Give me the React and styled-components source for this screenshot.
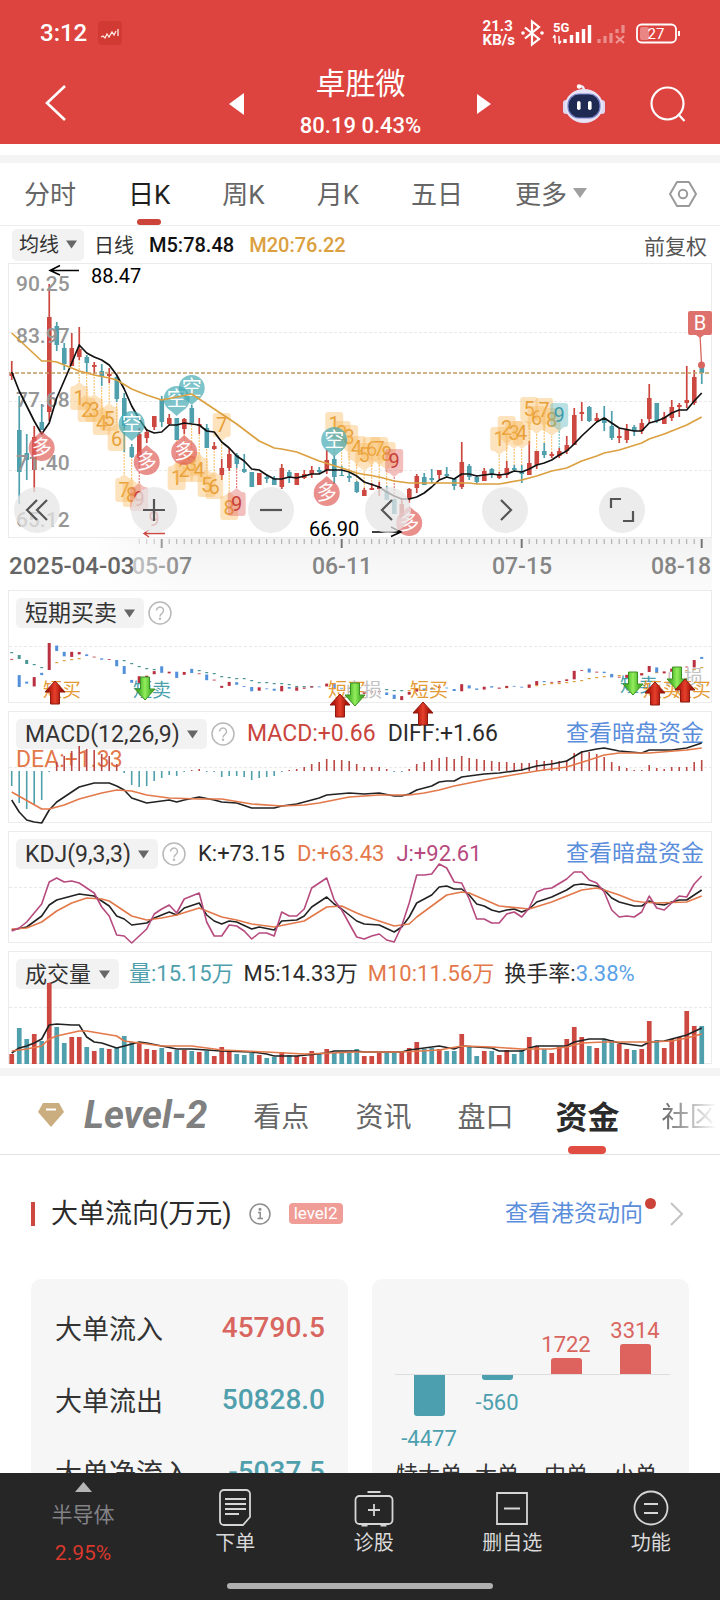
import styled, { createGlobalStyle } from "styled-components";

const RED = '#cc4840'
const TEAL = '#4f9fad'
const ORANGE = '#e3784a'
const GOLD = '#dba040'
const STEP = 7.5
const xOf = (i) => 11.7 + i * STEP

// color, body top, body bottom, high, low
const candles = [
    ['r', 372, 375, 360, 379], ['t', 429, 471, 395, 503], ['t', 452, 459, 433, 479], ['r', 436, 469, 425, 491],
    ['t', 421, 429, 403, 429], ['r', 316, 411, 283, 420], ['t', 325, 344, 321, 350], ['t', 347, 363, 342, 369],
    ['r', 347, 365, 332, 365], ['r', 348, 356, 326, 359], ['t', 356, 362, 354, 371], ['r', 364, 366, 361, 373],
    ['t', 370, 375, 363, 385], ['r', 373, 375, 367, 382], ['t', 376, 398, 374, 401], ['t', 397, 425, 392, 451],
    ['t', 446, 456, 443, 457], ['r', 433, 457, 427, 462], ['r', 431, 437, 428, 442], ['r', 415, 426, 415, 429],
    ['t', 398, 421, 395, 426], ['r', 417, 423, 413, 425], ['t', 417, 439, 417, 439], ['r', 418, 428, 417, 433],
    ['t', 407, 422, 404, 422], ['r', 423, 425, 417, 433], ['t', 427, 447, 423, 447], ['r', 445, 448, 441, 449],
    ['r', 467, 474, 458, 479], ['r', 453, 467, 447, 470], ['t', 454, 463, 452, 467], ['t', 468, 471, 453, 472],
    ['t', 471, 486, 471, 486], ['r', 472, 484, 472, 484], ['t', 476, 478, 473, 482], ['t', 477, 484, 475, 484],
    ['r', 467, 486, 463, 488], ['t', 471, 477, 469, 482], ['r', 472, 484, 472, 484], ['r', 473, 477, 469, 478],
    ['r', 469, 473, 465, 477], ['t', 469, 471, 466, 473], ['r', 459, 469, 449, 473], ['t', 458, 476, 455, 483],
    ['t', 474, 475, 465, 475], ['t', 475, 477, 472, 481], ['t', 481, 491, 480, 492], ['r', 489, 495, 487, 495],
    ['r', 487, 489, 482, 489], ['r', 486, 488, 481, 495], ['t', 490, 499, 485, 499], ['t', 498, 513, 498, 513],
    ['r', 503, 517, 498, 517], ['r', 488, 498, 487, 502], ['r', 475, 487, 473, 492], ['t', 476, 484, 472, 484],
    ['t', 477, 479, 468, 482], ['r', 469, 474, 469, 478], ['t', 473, 475, 466, 477], ['t', 478, 485, 478, 489],
    ['r', 461, 486, 441, 488], ['t', 465, 476, 463, 479], ['t', 476, 481, 474, 483], ['r', 470, 480, 467, 480],
    ['t', 468, 473, 467, 477], ['r', 473, 477, 471, 478], ['r', 467, 474, 460, 477], ['t', 467, 469, 464, 470],
    ['t', 470, 473, 464, 482], ['r', 462, 474, 440, 474], ['r', 450, 464, 450, 468], ['t', 450, 454, 442, 457],
    ['r', 453, 455, 451, 457], ['r', 450, 455, 447, 457], ['r', 444, 450, 435, 453], ['r', 414, 444, 407, 444],
    ['r', 411, 413, 401, 420], ['t', 406, 420, 405, 421], ['r', 417, 420, 412, 421], ['t', 417, 422, 405, 430],
    ['t', 425, 437, 410, 439], ['r', 435, 437, 427, 442], ['r', 428, 439, 423, 442], ['t', 426, 430, 424, 435],
    ['r', 422, 430, 418, 433], ['r', 397, 418, 383, 422], ['t', 402, 420, 402, 422], ['r', 416, 423, 411, 423],
    ['r', 406, 417, 399, 420], ['r', 404, 406, 402, 416], ['r', 399, 402, 365, 407], ['r', 376, 402, 369, 404],
    ['t', 365, 372, 365, 383],
]

// every line is a list of [bar index, y]
const ma5 = [[0, 371], [1, 390], [2, 405], [3, 420], [4, 433], [5, 422], [6, 397], [7.5, 371], [9, 344], [10, 352], [11, 356], [12, 359], [13, 364], [14, 374], [15, 388], [16, 405], [17, 418], [18, 429], [19, 432], [20, 431], [21, 424], [22, 424], [23, 422], [25, 424], [26, 430], [27, 431], [28, 441], [29, 447], [30, 455], [31, 460], [32, 468], [33, 469], [34, 474], [35, 478], [36, 478], [37, 476], [38, 477], [39, 475], [40, 473], [41, 473], [42, 469], [44, 469], [45, 471], [46, 475], [47, 481], [49, 486], [50, 491], [51, 495], [52, 498], [53, 498], [54, 496], [55, 492], [56, 486], [57, 479], [58, 476], [59, 478], [60, 473], [61, 473], [62, 475], [63, 474], [64, 473], [65, 474], [66, 473], [67, 470], [68, 471], [69, 468], [70, 464], [71, 462], [72, 459], [73, 454], [74, 450], [75, 443], [76, 435], [77, 428], [78, 421], [79, 417], [80, 422], [81, 427], [83, 430], [84, 430], [85, 422], [86, 420], [87, 417], [88, 412], [89, 409], [90, 409], [91, 400], [92, 392]]
const ma20 = [[0, 332], [1, 339], [4, 360], [5, 360], [6, 361], [7, 364], [9, 370], [11, 374], [13, 377], [14, 379], [16, 388], [18, 394], [20, 399], [24, 393], [28, 413], [30, 423], [33, 440], [35, 447], [36, 448], [38, 451], [41, 460], [44, 467], [46, 472], [49, 476], [51, 480], [53, 482], [61, 482], [62, 483], [65, 483], [68, 479], [70, 475], [72, 470], [74, 467], [76, 460], [78, 455], [79, 452], [81, 449], [84, 442], [85, 438], [87, 433], [89, 427], [90, 424], [92, 416]]
const diff = [[0, 798], [1, 810], [2, 818], [3, 820], [4, 821], [5, 808], [6, 800], [7, 795], [9, 785], [11, 781], [13, 781], [14, 784], [15, 788], [16, 796], [18, 801], [19, 800], [21, 798], [22, 800], [23, 798], [25, 795], [27, 798], [28, 800], [30, 801], [32, 806], [35, 806], [36, 804], [38, 802], [41, 796], [42, 793], [45, 791], [47, 792], [49, 791], [51, 794], [52, 794], [53, 792], [54, 788], [56, 784], [57, 780], [58, 779], [59, 779], [60, 775], [63, 772], [65, 771], [68, 768], [70, 764], [72, 762], [74, 759], [76, 750], [78, 747], [79, 746], [81, 749], [84, 751], [85, 748], [88, 748], [90, 746], [92, 741]]
const dea = [[0, 790], [4, 807], [5, 807], [7, 803], [9, 797], [12, 791], [14, 788], [16, 789], [18, 793], [21, 796], [25, 797], [28, 797], [32, 802], [36, 804], [39, 803], [41, 801], [45, 795], [49, 793], [53, 793], [55, 791], [57, 788], [59, 784], [61, 781], [63, 778], [66, 774], [70, 769], [74, 765], [77, 758], [79, 753], [81, 751], [85, 751], [90, 748], [92, 746]]
const kLine = [[0, 928], [2, 925], [4, 914], [5, 903], [6, 898], [7, 896], [9, 892], [11, 894], [13, 904], [14, 914], [15, 917], [16, 923], [18, 921], [19, 916], [21, 910], [22, 913], [23, 906], [25, 901], [26, 913], [27, 919], [28, 922], [29, 919], [30, 920], [32, 927], [33, 925], [35, 928], [36, 919], [38, 918], [39, 914], [40, 905], [42, 895], [43, 902], [44, 907], [46, 919], [47, 922], [49, 923], [51, 930], [52, 925], [53, 915], [54, 901], [56, 893], [57, 885], [58, 884], [59, 887], [60, 887], [61, 893], [62, 902], [63, 904], [64, 908], [65, 910], [66, 908], [67, 907], [68, 910], [69, 907], [70, 900], [72, 895], [74, 888], [75, 883], [76, 882], [78, 884], [79, 888], [80, 896], [81, 900], [83, 904], [84, 904], [85, 899], [86, 902], [87, 903], [88, 900], [89, 898], [90, 898], [92, 888]]
const dLine = [[0, 927], [2, 926], [4, 920], [6, 909], [8, 901], [10, 896], [12, 897], [13, 899], [16, 914], [18, 918], [20, 916], [22, 913], [25, 906], [28, 915], [30, 918], [32, 922], [35, 925], [39, 919], [42, 905], [44, 904], [46, 911], [47, 914], [49, 919], [51, 924], [53, 922], [54, 915], [56, 904], [58, 893], [60, 890], [61, 891], [65, 904], [69, 907], [72, 900], [76, 888], [78, 886], [79, 888], [81, 893], [83, 899], [84, 900], [86, 901], [90, 900], [92, 894]]
const jLine = [[0, 929], [1, 926], [2, 920], [4, 902], [5, 880], [6, 876], [7, 880], [8, 879], [9, 881], [10, 886], [11, 891], [12, 905], [13, 914], [14, 933], [15, 934], [16, 941], [17, 934], [18, 927], [19, 912], [20, 907], [21, 903], [22, 911], [23, 897], [25, 891], [26, 920], [27, 934], [28, 934], [29, 923], [30, 924], [31, 929], [32, 937], [33, 931], [34, 931], [35, 934], [36, 910], [37, 914], [38, 914], [39, 907], [40, 886], [41, 881], [42, 876], [43, 898], [44, 908], [46, 935], [47, 937], [48, 934], [49, 932], [50, 938], [51, 940], [52, 924], [53, 901], [54, 873], [55, 873], [56, 872], [57, 862], [58, 866], [59, 880], [60, 881], [61, 897], [62, 917], [63, 917], [64, 921], [65, 921], [66, 912], [67, 910], [68, 915], [69, 906], [70, 890], [71, 887], [72, 886], [74, 877], [75, 870], [76, 870], [77, 878], [78, 881], [79, 890], [80, 908], [81, 915], [82, 914], [83, 915], [84, 910], [85, 894], [86, 906], [87, 908], [89, 894], [90, 895], [91, 882], [92, 874]]
const vol5 = [[0, 1052], [1, 1047], [2, 1045], [3, 1042], [4, 1038], [5, 1024], [6, 1023], [8, 1024], [9, 1024], [10, 1036], [11, 1041], [12, 1042], [14, 1047], [16, 1043], [17, 1041], [18, 1042], [20, 1045], [22, 1048], [24, 1048], [28, 1050], [32, 1051], [34, 1053], [35, 1055], [38, 1055], [42, 1052], [43, 1050], [46, 1050], [47, 1051], [52, 1051], [53, 1049], [55, 1047], [57, 1045], [59, 1048], [60, 1045], [64, 1047], [65, 1050], [68, 1050], [69, 1047], [70, 1045], [74, 1045], [75, 1041], [77, 1038], [79, 1038], [81, 1042], [84, 1045], [85, 1041], [87, 1040], [89, 1036], [90, 1034], [92, 1027]]
const vol10 = [[0, 1050], [2, 1048], [4, 1045], [5, 1038], [6, 1035], [9, 1030], [10, 1030], [14, 1035], [15, 1040], [17, 1042], [20, 1045], [24, 1045], [28, 1049], [34, 1051], [39, 1053], [46, 1051], [52, 1051], [57, 1049], [60, 1045], [64, 1046], [68, 1048], [72, 1048], [74, 1046], [76, 1042], [79, 1041], [85, 1041], [88, 1040], [90, 1037], [92, 1033]]

const macdBars = [-15, -32, -38, -34, -29, -1, 9, 15, 20, 25, 22, 21, 17, 15, 7, -2, -14, -16, -15, -10, -7, -4, -5, -1, 1, 2, -1, -1, -6, -5, -5, -6, -9, -7, -6, -5, -1, 1, 2, 4, 7, 9, 12, 11, 11, 10, 7, 4, 4, 4, 2, -1, -1, 2, 7, 9, 11, 13, 14, 12, 15, 13, 12, 11, 10, 9, 9, 8, 8, 8, 11, 10, 11, 10, 11, 18, 20, 19, 17, 14, 9, 5, 3, 1, 1, 6, 3, 2, 4, 4, 4, 9, 11]
const volumes = [10, 36, 25, 30, 23, 81, 37, 21, 27, 27, 17, 13, 16, 15, 16, 28, 22, 21, 15, 14, 16, 12, 14, 14, 13, 12, 13, 8, 17, 13, 10, 9, 11, 9, 6, 7, 12, 9, 8, 7, 13, 10, 15, 11, 11, 12, 15, 8, 8, 11, 11, 11, 12, 16, 22, 15, 16, 15, 13, 13, 30, 17, 8, 13, 13, 9, 14, 10, 14, 27, 18, 15, 11, 17, 25, 37, 27, 18, 16, 25, 24, 20, 15, 14, 15, 43, 24, 16, 25, 27, 53, 38, 38]

const shortDown = [[0, 651], [1, 654], [2, 659], [3, 663], [4, 666], [15, 659], [16, 662], [17, 665], [18, 667], [19, 668], [25, 669], [26, 671], [27, 672], [28, 675], [29, 676], [30, 677], [31, 677], [32, 679], [33, 681], [34, 681], [35, 682], [36, 682], [37, 683], [38, 685], [39, 685], [40, 685], [50, 688], [51, 689], [52, 689]]
const shortUp = [[6, 661], [7, 659], [8, 658], [9, 657], [53, 689], [54, 688], [56, 687], [66, 686], [69, 684], [70, 684], [71, 683], [72, 682], [73, 682], [74, 681], [75, 680], [76, 679], [77, 677], [78, 676], [79, 675], [80, 674], [81, 674], [84, 673], [86, 671], [88, 669], [90, 669], [91, 668], [92, 666]]

// bar index, centre y, text, tip direction, color
const tags = [
    [9, 397, '1', 'up'], [10, 409, '2', 'up'], [11, 409, '3', 'up'], [12, 422, '4', 'up'], [13, 418, '5', 'up'],
    [14, 438, '6', 'up'], [15, 489, '7', 'up'], [16, 494, '8', 'up'], [17, 498, '9', 'up', 'r'],
    [22, 477, '1', 'up'], [23, 469, '2', 'up'], [24, 463, '3', 'up'], [25, 469, '4', 'up'], [26, 484, '5', 'up'],
    [27, 486, '6', 'up'], [28, 424, '7', 'down'], [29, 507, '8', 'up'], [30, 503, '9', 'up', 'r'],
    [43, 423, '1', 'down'], [44, 432, '2', 'down'], [45, 436, '3', 'down'], [46, 447, '4', 'down'], [47, 454, '5', 'down'],
    [48, 448, '6', 'down'], [49, 448, '7', 'down'], [50, 453, '8', 'down'], [51, 460, '9', 'down', 'r'],
    [65, 438, '1', 'down'], [66, 427, '2', 'down'], [67, 432, '3', 'down'], [68, 432, '4', 'down'], [69, 408, '5', 'down'],
    [70, 417, '6', 'down'], [71, 409, '7', 'down'], [72, 419, '8', 'down'], [73, 414, '9', 'down', 't'],
]
const bubbles = [
    [16, 423, '空'], [22, 398, '空'], [24, 387, '空'], [43, 439, '空'],
    [4, 447, '多'], [18, 461, '多'], [23, 451, '多'], [42, 492, '多'], [53, 522, '多'],
]

const points = (line) => line.map(([i, y]) => `${xOf(i)},${y}`).join(' ')
const tone = (c) => (c === 'r' ? RED : TEAL)

function Line({ data, color, width = 1.6 }) {
    return <polyline points={points(data)} fill="none" stroke={color} strokeWidth={width} strokeLinejoin="round" />
}

function Frame({ y, h, gridY = [] }) {
    return (
        <>
            <rect x="8.5" y={y + 0.5} width="703" height={h - 1} fill="none" stroke="#ebebeb" />
            {gridY.map(g => (
                <path key={g} d={`M9 ${g}H711`} stroke="#e9e9e9" strokeDasharray="3 2" />
            ))}
        </>
    )
}

function Tag({ data }) {
    const [i, y, text, dir, kind] = data
    const fill = kind === 'r' ? '#e0605c' : kind === 't' ? '#58b4ba' : '#f9bb5e'
    const color = kind === 'r' ? '#c9403a' : kind === 't' ? '#3f9cab' : '#e8a038'
    const x = xOf(i)
    const edge = dir === 'up' ? candles[i][4] : candles[i][3]
    const tip = dir === 'up' ? `M${x - 5} ${y - 12}l5 -4 5 4z` : `M${x - 5} ${y + 12}l5 4 5 -4z`
    return (
        <g>
            <path d={`M${x} ${dir === 'up' ? y - 16 : y + 16}V${edge}`} stroke={fill} strokeDasharray="2 1" />
            <g opacity="0.4">
                <rect x={x - 9} y={y - 12} width="18" height="24" rx="3" fill={fill} />
                <path d={tip} fill={fill} />
            </g>
            <TagText x={x} y={y + 7} fill={color}>{text}</TagText>
        </g>
    )
}

function Bubble({ data }) {
    const [i, y, text] = data
    const x = xOf(i)
    const fill = text === '空' ? '#45aab4' : '#e0605c'
    const tip = text === '空' ? `M${x - 9} ${y + 9}L${x} ${y + 17}L${x + 9} ${y + 9}z` : `M${x - 9} ${y - 9}L${x} ${y - 17}L${x + 9} ${y - 9}z`
    return (
        <g>
            <g opacity="0.7">
                <circle cx={x} cy={y} r="13" fill={fill} />
                <path d={tip} fill={fill} />
            </g>
            <TagText x={x} y={y + 7} fill="#ffffff">{text}</TagText>
        </g>
    )
}

function KLineChart() {
    return (
        <Drawing viewBox="8 262 704 275">
            <Frame y={262} h={275} gridY={[331.5, 400.5, 469.5]} />
            {candles.map(([c, top, bottom, high, low], i) => (
                <g key={i} fill={tone(c)}>
                    <rect x={xOf(i) - 0.8} y={high} width="1.7" height={low - high} />
                    <rect x={xOf(i) - 2.2} y={top} width="4.6" height={Math.max(bottom - top, 1)} />
                </g>
            ))}
            <AxisText x="16" y="290">90.25</AxisText>
            <AxisText x="16" y="342">83.97</AxisText>
            <AxisText x="16" y="406">77.68</AxisText>
            <AxisText x="16" y="469">71.40</AxisText>
            <AxisText x="16" y="526">65.12</AxisText>
            <path d="M9 372H711" stroke="#c49a62" strokeWidth="1.4" strokeDasharray="4 2" />
            {tags.map((t, i) => <Tag key={i} data={t} />)}
            <Line data={ma5} color="#111111" width={1.7} />
            {bubbles.map((b, i) => <Bubble key={i} data={b} />)}
            <Line data={ma20} color={GOLD} width={1.7} />
            <TagText x="154" y="525" fill="#d55a54">9</TagText>
            <path d="M165 532.5H144M149 529l-5 3.500 5 3.500" fill="none" stroke="#cc4840" strokeWidth="1.4" />
            <path d="M79 269.500H50M60 264.500l-10 5 10 4.500" fill="none" stroke="#000000" strokeWidth="1.5" />
            <NoteText x="91" y="282">88.47</NoteText>
            <NoteText x="309" y="535">66.90</NoteText>
            <path d="M372 531H401M391 526l10 5-10 4.500" fill="none" stroke="#000000" strokeWidth="1.5" />
            <path d="M700 334L701.500 362" stroke="#d9655f" strokeWidth="1.3" />
            <circle cx="701.500" cy="364" r="3.500" fill="#d9655f" />
            <path d="M690 310h20a2 2 0 0 1 2 2v20a2 2 0 0 1 -2 2h-6l-4 3 -4-3h-6a2 2 0 0 1 -2-2v-20a2 2 0 0 1 2-2z" fill="#de716c" />
            <TagText x="700" y="329" fill="#ffffff">B</TagText>
        </Drawing>
    )
}

function TimeAxis() {
    const majors = [20, 44, 68, 92]
    return (
        <Drawing viewBox="8 537 704 52">
            <defs>
                <linearGradient id="axisDown" x1="0" y1="0" x2="0" y2="1">
                    <stop offset="0" stopColor="#f2f2f2" />
                    <stop offset="1" stopColor="#fbfbfb" />
                </linearGradient>
                <linearGradient id="axisFade" x1="0" y1="0" x2="1" y2="0">
                    <stop offset="0" stopColor="#ffffff" />
                    <stop offset="0.5" stopColor="#ffffff" stopOpacity="0.9" />
                    <stop offset="1" stopColor="#ffffff" stopOpacity="0" />
                </linearGradient>
            </defs>
            <rect x="8" y="537" width="704" height="52" fill="url(#axisDown)" />
            {candles.map((c, i) => i > 16 && (
                <path key={i} d={`M${xOf(i)} 538v${majors.includes(i) ? 9 : 5}`} stroke={majors.includes(i) ? '#777777' : '#a5a5a5'} strokeWidth={majors.includes(i) ? 2 : 1} />
            ))}
            <DateText x="162" y="573" $anchor="middle">05-07</DateText>
            <DateText x="342" y="573" $anchor="middle">06-11</DateText>
            <DateText x="522" y="573" $anchor="middle">07-15</DateText>
            <DateText x="711" y="573" $anchor="end">08-18</DateText>
            <rect x="8" y="537" width="180" height="52" fill="url(#axisFade)" />
            <DateText x="9" y="573" $dark>2025-04-03</DateText>
        </Drawing>
    )
}

function SignalArrow({ x, y, up }) {
    const d = up
        ? `M${x} ${y}l10 11h-5.500v12h-9v-12h-5.500z`
        : `M${x} ${y + 23}l10 -11h-5.500v-12h-9v12h-5.500z`
    return <path d={d} fill={up ? 'url(#arrowRed)' : 'url(#arrowGreen)'} stroke={up ? '#8c1a10' : '#3c8f22'} strokeWidth="1" />
}

function ShortTermChart() {
    const scale = (y) => 641 + (y - 316) * 0.284
    return (
        <Drawing viewBox="8 588 704 113">
            <defs>
                <linearGradient id="arrowRed" x1="0" y1="0" x2="1" y2="0">
                    <stop offset="0.2" stopColor="#b3170c" />
                    <stop offset="0.5" stopColor="#e5402c" />
                    <stop offset="0.8" stopColor="#a8140a" />
                </linearGradient>
                <linearGradient id="arrowGreen" x1="0" y1="0" x2="1" y2="0">
                    <stop offset="0.2" stopColor="#48b22a" />
                    <stop offset="0.5" stopColor="#93ee5c" />
                    <stop offset="0.8" stopColor="#48b22a" />
                </linearGradient>
            </defs>
            <Frame y={588} h={113} gridY={[644.5]} />
            {shortDown.map(([i, y]) => <rect key={i} x={xOf(i) - 1.5} y={y - 1} width="3" height={i > 0 && i < 3 ? 4 : 1.2} fill="#4a9793" />)}
            {shortUp.map(([i, y]) => <rect key={i} x={xOf(i) - 1.5} y={y - 1} width="3" height="1.2" fill={GOLD} />)}
            {candles.map(([c, top, bottom], i) => (
                <rect key={i} x={xOf(i) - 1.5} y={scale(top)} width="3" height={Math.max(scale(bottom) - scale(top), 0.8)} fill={c === 'r' ? '#b93040' : '#5290dc'} />
            ))}
            <SignalText x="43" y="695" fill="#e59b35">短买</SignalText>
            <SignalText x="133" y="695" fill="#4a9fad">短卖</SignalText>
            <SignalText x="328" y="695" fill="#e59b35">短买</SignalText>
            <SignalText x="344" y="695" fill="#c2c2c2">止损</SignalText>
            <SignalText x="410" y="695" fill="#e59b35">短买</SignalText>
            <SignalText x="620" y="690" fill="#4a9fad">短卖</SignalText>
            <SignalText x="665" y="682" fill="#c2c2c2">止损</SignalText>
            <SignalText x="643" y="695" fill="#e59b35">短买</SignalText>
            <SignalText x="673" y="695" fill="#e59b35">短买</SignalText>
            <SignalArrow x={55} y={679} up />
            <SignalArrow x={145} y={675} />
            <SignalArrow x={340} y={692} up />
            <SignalArrow x={355} y={681} />
            <SignalArrow x={423} y={700} up />
            <SignalArrow x={633} y={670} />
            <SignalArrow x={655} y={680} up />
            <SignalArrow x={677} y={665} />
            <SignalArrow x={685} y={677} up />
        </Drawing>
    )
}

function MacdChart() {
    return (
        <Drawing viewBox="8 709 704 112">
            <Frame y={709} h={112} gridY={[765.5]} />
            {macdBars.map((v, i) => (
                <rect key={i} x={xOf(i) - 0.8} y={v > 0 ? 769 - v : 769} width="1.600" height={Math.abs(v)} fill={v > 0 ? '#bb4a46' : '#4f9fad'} />
            ))}
            <Line data={diff} color="#222222" />
            <Line data={dea} color={ORANGE} />
        </Drawing>
    )
}

function KdjChart() {
    return (
        <Drawing viewBox="8 829 704 112">
            <Frame y={829} h={112} gridY={[885.5]} />
            <Line data={kLine} color="#222222" />
            <Line data={dLine} color={ORANGE} />
            <Line data={jLine} color="#b64a7e" />
        </Drawing>
    )
}

function VolumeChart() {
    return (
        <Drawing viewBox="8 950 704 113">
            <Frame y={950} h={113} gridY={[1006.5]} />
            {volumes.map((v, i) => (
                <rect key={i} x={xOf(i) - 2.3} y={1063 - v} width="4.700" height={v} fill={tone(candles[i][0])} />
            ))}
            <Line data={vol5} color="#222222" />
            <Line data={vol10} color={ORANGE} />
        </Drawing>
    )
}

function FlowChart() {
    const bars = [
        { name: '特大单', value: '-4477', x: 42, h: 41, labelY: 167 },
        { name: '大单', value: '-560', x: 110, h: 5, labelY: 131 },
        { name: '中单', value: '1722', x: 179, h: -16, labelY: 73 },
        { name: '小单', value: '3314', x: 248, h: -30, labelY: 59 },
    ]
    return (
        <Drawing viewBox="0 0 317 240">
            <path d="M23 95.500H298" stroke="#dddddd" />
            {bars.map(b => (
                <g key={b.name}>
                    <path
                        d={b.h > 0
                            ? `M${b.x} 96h31v${b.h - 3}q0 3 -3 3h-25q-3 0 -3 -3z`
                            : `M${b.x} 95h31v${b.h + 3}q0 -3 -3 -3h-25q-3 0 -3 3z`}
                        fill={b.h > 0 ? '#4b9fae' : '#de625e'}
                    />
                    <FlowText x={b.x + 15} y={b.labelY} fill={b.h > 0 ? '#4b9fae' : '#d9655f'}>{b.value}</FlowText>
                    <FlowText x={b.x + 15} y="203" fill="#333333">{b.name}</FlowText>
                </g>
            ))}
        </Drawing>
    )
}

function Caret({ size = 11, color = '#666666' }) {
    return <svg width={size} height={size - 2} viewBox="0 0 11 9"><path d="M0 0.500h11L5.500 8.500z" fill={color} /></svg>
}

function Picker({ text, label, small }) {
    return (
        <Pill $small={small}>
            <select aria-label={label}>
                <option>{text}</option>
            </select>
            <Caret />
        </Pill>
    )
}

function Help() {
    return (
        <IconButton type="button" aria-label="说明">
            <svg width="24" height="24" viewBox="0 0 24 24" fill="none" stroke="#b9b9b9" strokeWidth="1.500">
                <circle cx="12" cy="12" r="11" />
                <path d="M8.500 9.500a3.500 3.500 0 1 1 5.500 2.900c-1.300 .9-2 1.500-2 3" />
                <circle cx="12" cy="17.800" r="0.500" />
            </svg>
        </IconButton>
    )
}

function StatusIcons() {
    return (
        <svg width="160" height="28" viewBox="520 19 160 28" fill="none" stroke="#ffffff">
            <path d="M525 27.500l14 11.500-7 5.500v-23l7 5.500-14 11.500" strokeWidth="2.200" />
            <circle cx="523" cy="33" r="1.800" fill="#ffffff" stroke="none" />
            <circle cx="542" cy="33" r="1.800" fill="#ffffff" stroke="none" />
            <StatusText x="553" y="32">5G</StatusText>
            <path d="M555 43v-7M559 36v7M553 38l2-3M561 41l-2 3" strokeWidth="1.400" />
            <path d="M565 43v-4M571.500 43v-8M577.500 43v-11M583.500 43v-14M589.500 43v-18" strokeWidth="3.400" />
            <path d="M599 43v-4M605 43v-7M611 43v-10M623 33v-8M617 33v-4" strokeWidth="3.200" opacity="0.4" />
            <path d="M616 36l8 7M624 36l-8 7" strokeWidth="2" opacity="0.45" />
            <rect x="637" y="24.500" width="39" height="18" rx="4.500" strokeWidth="1.800" />
            <rect x="640" y="27" width="9" height="13" rx="2" fill="#ffffff" stroke="none" opacity="0.35" />
            <path d="M679 31v5" strokeWidth="2" />
            <BatteryText x="656" y="39">27</BatteryText>
        </svg>
    )
}

function Robot() {
    return (
        <svg width="44" height="42" viewBox="0 0 44 42">
            <path d="M22 8c0-3-1-5-4-5" fill="none" stroke="#e9e6f5" strokeWidth="2.500" />
            <circle cx="17" cy="3.500" r="2.200" fill="#ffffff" />
            <rect x="1" y="17" width="6" height="14" rx="3" fill="#dcd6f2" />
            <rect x="37" y="17" width="6" height="14" rx="3" fill="#dcd6f2" />
            <ellipse cx="22" cy="23" rx="19" ry="17" fill="#e8e4f7" />
            <rect x="6" y="11" width="32" height="24" rx="11" fill="#1f2a52" stroke="#7c83c9" strokeWidth="1.200" />
            <rect x="15" y="18" width="3.600" height="9" rx="1.800" fill="#ffffff" />
            <rect x="26" y="18" width="3.600" height="9" rx="1.800" fill="#ffffff" />
        </svg>
    )
}

const toolIcons = [
    { label: '后退到最早', d: 'M23 13L13 23l10 10M33 13L23 23l10 10' },
    { label: '放大', d: 'M23 12v22M12 23h22' },
    { label: '缩小', d: 'M12 23h22' },
    { label: '向左', d: 'M27 13L17 23l10 10' },
    { label: '向右', d: 'M19 13l10 10-10 10' },
    { label: '全屏', d: 'M12 21V12h10M24 34h10v-10' },
]

const navIcons = [
    { name: '下单', d: 'M5 1h22a4 4 0 0 1 4 4v23l-7 8H5a4 4 0 0 1-4-4V5a4 4 0 0 1 4-4zM6 10h21M6 15h21M6 20h21M6 25h14' },
    { name: '诊股', d: 'M4 7h29a4 4 0 0 1 4 4v20a4 4 0 0 1-4 4H4a4 4 0 0 1-4-4V11a4 4 0 0 1 4-4zM12 3h13M18.500 15v12M12.500 21h12M6 36.500h6M25 36.500h6' },
    { name: '删自选', d: 'M1 4h30v31H1zM8 19.500h16' },
    { name: '功能', d: 'M16 2.500a16.500 16.500 0 1 1 0 33a16.500 16.500 0 1 1 0-33zM9 15h14M9 24h14' },
]

const periods = ['分时', '日K', '周K', '月K', '五日']

export default function App() {
    return (
        <Page>
            <GlobalStyle />
            <TopBar>
                <StatusBar>
                    <Clock>
                        3:12
                        <svg width="24" height="24" viewBox="0 0 24 24">
                            <rect width="24" height="24" rx="4" fill="#d03a33" />
                            <path d="M3 16l2-1 2 2 2-4 2 3 3-5 2 3 2-4M20 8v7" fill="none" stroke="#ffe9e4" strokeWidth="1.300" />
                        </svg>
                    </Clock>
                    <StatusRight>
                        <Speed>21.3<br />KB/s</Speed>
                        <StatusIcons />
                    </StatusRight>
                </StatusBar>
                <NavRow>
                    <NavSide>
                        <IconButton type="button" aria-label="返回">
                            <svg width="22" height="38" viewBox="0 0 22 38"><path d="M20 1L2 18l18 17" fill="none" stroke="#ffffff" strokeWidth="2.600" /></svg>
                        </IconButton>
                    </NavSide>
                    <StockSwitch>
                        <IconButton type="button" aria-label="上一只">
                            <svg width="15" height="22" viewBox="0 0 15 22"><path d="M15 0v22L0 11z" fill="#ffffff" /></svg>
                        </IconButton>
                        <StockTitle>
                            <h1>卓胜微</h1>
                            <p>80.19 0.43%</p>
                        </StockTitle>
                        <IconButton type="button" aria-label="下一只">
                            <svg width="14" height="20" viewBox="0 0 14 20"><path d="M0 0v20l14-10z" fill="#ffffff" /></svg>
                        </IconButton>
                    </StockSwitch>
                    <NavSide $end>
                        <IconButton type="button" aria-label="智能助手"><Robot /></IconButton>
                        <IconButton type="button" aria-label="搜索">
                            <svg width="36" height="36" viewBox="0 0 36 36" fill="none" stroke="#ffffff" strokeWidth="2.200">
                                <circle cx="17.500" cy="17.500" r="16" />
                                <path d="M28 28l6.500 7" />
                            </svg>
                        </IconButton>
                    </NavSide>
                </NavRow>
            </TopBar>

            <Content>
                <Band $top={11} />
                <PeriodTabs>
                    {periods.map(p => (
                        <PeriodTab key={p} type="button" $active={p === '日K'}>{p}</PeriodTab>
                    ))}
                    <PeriodTab type="button">更多<Caret size={14} color="#a0a0a0" /></PeriodTab>
                    <SettingsButton type="button" aria-label="设置">
                        <svg width="28" height="28" viewBox="0 0 28 28" fill="none" stroke="#9a9a9a" strokeWidth="2">
                            <path d="M8 2h12l7 12-7 12H8L1 14z" strokeLinejoin="round" />
                            <circle cx="14" cy="14" r="4.200" />
                        </svg>
                    </SettingsButton>
                </PeriodTabs>

                <Charts>
                    <AverageRow>
                        <Picker text="均线" label="指标" small />
                        <span>日线</span>
                        <Average $color="#111111">M5:78.48</Average>
                        <Average $color={GOLD}>M20:76.22</Average>
                        <Adjust type="button">前复权</Adjust>
                    </AverageRow>
                    <Stack>
                        <KLineChart />
                        <ToolRow>
                            {toolIcons.map(t => (
                                <RoundButton key={t.label} type="button" aria-label={t.label}>
                                    <svg width="46" height="46" viewBox="0 0 46 46"><path d={t.d} fill="none" stroke="#555555" strokeWidth="2.200" /></svg>
                                </RoundButton>
                            ))}
                        </ToolRow>
                    </Stack>
                    <TimeAxis />
                    <Panels>
                        <Stack $raised>
                            <ShortTermChart />
                            <PanelHead>
                                <Picker text="短期买卖" label="副图一" />
                                <Help />
                            </PanelHead>
                        </Stack>
                        <Stack>
                            <PanelHead>
                                <Picker text="MACD(12,26,9)" label="副图二" />
                                <Help />
                                <Value $color="#c9443d">MACD:+0.66</Value>
                                <Value>DIFF:+1.66</Value>
                                <DarkLink href="#dark">查看暗盘资金</DarkLink>
                                <Value $color={ORANGE}>DEA:+1.33</Value>
                            </PanelHead>
                            <MacdChart />
                        </Stack>
                        <Stack>
                            <PanelHead>
                                <Picker text="KDJ(9,3,3)" label="副图三" />
                                <Help />
                                <Value $small>K:+73.15</Value>
                                <Value $small $color={ORANGE}>D:+63.43</Value>
                                <Value $small $color="#b64a7e">J:+92.61</Value>
                                <DarkLink href="#dark">查看暗盘资金</DarkLink>
                            </PanelHead>
                            <KdjChart />
                        </Stack>
                        <Stack>
                            <PanelHead $compact>
                                <Picker text="成交量" label="副图四" />
                                <Value $color={TEAL}>量:15.15万</Value>
                                <Value>M5:14.33万</Value>
                                <Value $color={ORANGE}>M10:11.56万</Value>
                                <Value>换手率:<em>3.38%</em></Value>
                            </PanelHead>
                            <VolumeChart />
                        </Stack>
                    </Panels>
                </Charts>

                <Band $top={4} />
                <InfoTabs>
                    <svg width="26" height="26" viewBox="0 0 26 26">
                        <path d="M5 1h16l5 9-13 15L0 10z" fill="#cbae80" />
                        <path d="M8 7.500h10" stroke="#ffffff" strokeWidth="2" />
                    </svg>
                    <LevelTab type="button">Level-2</LevelTab>
                    <InfoTab type="button">看点</InfoTab>
                    <InfoTab type="button">资讯</InfoTab>
                    <InfoTab type="button">盘口</InfoTab>
                    <InfoTab type="button" $active>资金</InfoTab>
                    <InfoTab type="button" $faded>社区</InfoTab>
                </InfoTabs>

                <SectionHead>
                    <h2>大单流向(万元)</h2>
                    <IconButton type="button" aria-label="说明">
                        <svg width="22" height="22" viewBox="0 0 22 22" fill="none" stroke="#8d8d8d" strokeWidth="1.500">
                            <circle cx="11" cy="11" r="10" />
                            <path d="M9 9.500h2.200v6M8.500 15.500h5.500" />
                            <circle cx="11" cy="6.300" r="0.800" fill="#8d8d8d" />
                        </svg>
                    </IconButton>
                    <LevelBadge>level2</LevelBadge>
                    <MoreLink href="#hk">
                        查看港资动向
                        <Dot />
                        <svg width="14" height="24" viewBox="0 0 14 24"><path d="M1 1l11 11L1 23" fill="none" stroke="#c4c4c4" strokeWidth="2" /></svg>
                    </MoreLink>
                </SectionHead>

                <Cards>
                    <Card>
                        <FlowTable>
                            <tbody>
                                <tr><th scope="row">大单流入</th><FlowValue $color="#d9655f">45790.5</FlowValue></tr>
                                <tr><th scope="row">大单流出</th><FlowValue $color={TEAL}>50828.0</FlowValue></tr>
                                <tr><th scope="row">大单净流入</th><FlowValue $color={TEAL}>-5037.5</FlowValue></tr>
                            </tbody>
                        </FlowTable>
                    </Card>
                    <Card>
                        <FlowChart />
                    </Card>
                </Cards>
            </Content>

            <BottomBar>
                <BottomNav>
                    <Sector type="button">
                        <svg width="17" height="10" viewBox="0 0 17 10"><path d="M8.500 0L17 10H0z" fill="#b5b5b5" /></svg>
                        <span>半导体</span>
                        <strong>2.95%</strong>
                    </Sector>
                    {navIcons.map(n => (
                        <BottomItem key={n.name} type="button">
                            <svg width="40" height="40" viewBox={n.name === '诊股' ? '-1.5 0 40 40' : '-4 0 40 40'}>
                                <path d={n.d} fill="none" stroke="#d6d6d6" strokeWidth="1.800" />
                            </svg>
                            {n.name}
                        </BottomItem>
                    ))}
                </BottomNav>
                <HomeBar />
            </BottomBar>
        </Page>
    )
}

const GlobalStyle = createGlobalStyle`
    * {
        box-sizing: border-box;
    }
    body, h1, h2, p {
        margin: 0;
    }
    body {
        font-family: Roboto, "Noto Sans CJK SC", sans-serif;
        color: #333333;
        background-color: #ffffff;
    }
    button, select {
        font-family: inherit;
        font-size: inherit;
        color: inherit;
        background: none;
        border: none;
        padding: 0;
        margin: 0;
    }
    svg {
        display: block;
        flex: none;
    }
`

const Page = styled.div`
    height: 100vh;
    display: flex;
    flex-direction: column;
`

const Content = styled.main`
    flex: 1;
    min-height: 0;
    overflow-x: hidden;
    overflow-y: auto;
    scrollbar-width: none;
`

const TopBar = styled.header`
    background-color: #dd4440;
    color: #ffffff;
`

const StatusBar = styled.div`
    height: 60px;
    padding: 6px 40px 0 40px;
    display: flex;
    align-items: center;
    justify-content: space-between;
`

const Clock = styled.div`
    display: flex;
    align-items: center;
    gap: 11px;
    font-size: 24px;
    font-weight: 500;
`

const StatusRight = styled.div`
    display: flex;
    align-items: center;
    gap: 5px;
`

const Speed = styled.div`
    font-size: 15px;
    line-height: 14px;
    font-weight: 700;
`

const NavRow = styled.div`
    height: 84px;
    display: grid;
    grid-template-columns: 1fr 262px 1fr;
    align-items: center;
`

const NavSide = styled.div`
    display: flex;
    align-items: center;
    justify-content: ${props => props.$end ? 'flex-end' : 'flex-start'};
    gap: 44px;
    padding: ${props => props.$end ? '0 34px 0 0' : '0 0 0 45px'};
`

const StockSwitch = styled.div`
    display: flex;
    align-items: center;
    justify-content: space-between;
`

const StockTitle = styled.div`
    padding-top: 3px;
    text-align: center;
    line-height: 42px;
    h1 {
        font-size: 30px;
        font-weight: 400;
    }
    p {
        font-size: 22px;
        font-weight: 500;
    }
`

const IconButton = styled.button`
    display: flex;
    align-items: center;
`

const Band = styled.div`
    height: 8px;
    margin-top: ${props => props.$top}px;
    background-color: #f4f4f4;
`

const PeriodTabs = styled.nav`
    height: 63px;
    padding: 0 23px 0 24px;
    display: flex;
    gap: 52px;
    border-bottom: 1px solid #ededed;
`

const PeriodTab = styled.button`
    display: flex;
    align-items: center;
    gap: 6px;
    position: relative;
    padding-bottom: 3px;
    font-size: 26px;
    color: ${props => props.$active ? '#1f1f1f' : '#666666'};
    &::after {
        content: "";
        display: ${props => props.$active ? 'block' : 'none'};
        position: absolute;
        left: calc(50% - 12px);
        bottom: 0;
        width: 24px;
        height: 6px;
        border-radius: 3px;
        background-color: #cc4339;
    }
`

const SettingsButton = styled(IconButton)`
    margin-left: auto;
`

const Charts = styled.section`
    padding: 0 8px;
`

const AverageRow = styled.div`
    height: 37px;
    padding: 0 5px 0 4px;
    display: flex;
    align-items: center;
    gap: 10px;
    font-size: 20px;
`

const Average = styled.span`
    color: ${props => props.$color};
    font-weight: 500;
    margin-left: 5px;
`

const Adjust = styled.button`
    margin-left: auto;
    font-size: 21px;
    color: #555555;
`

const Stack = styled.div`
    display: grid;
    position: relative;
    z-index: ${props => props.$raised ? 1 : 0};
    > * {
        grid-area: 1 / 1;
        min-width: 0;
    }
`

const Drawing = styled.svg`
    width: 100%;
    height: auto;
    overflow: visible;
`

const AxisText = styled.text`
    font-size: 21px;
    font-weight: 500;
    fill: #969696;
`

const NoteText = styled.text`
    font-size: 20px;
    fill: #000000;
`

const TagText = styled.text`
    font-size: 20px;
    text-anchor: middle;
`

const SignalText = styled.text`
    font-size: 19px;
`

const DateText = styled.text`
    font-size: ${props => props.$dark ? 24 : 23}px;
    font-weight: 500;
    text-anchor: ${props => props.$anchor || 'start'};
    fill: ${props => props.$dark ? '#666666' : '#858585'};
`

const FlowText = styled.text`
    font-size: 22px;
    text-anchor: middle;
`

const StatusText = styled.text`
    font-size: 13px;
    font-weight: 700;
    fill: #ffffff;
    stroke: none;
`

const BatteryText = styled.text`
    font-size: 15px;
    fill: #ffffff;
    stroke: none;
    text-anchor: middle;
`

const ToolRow = styled.div`
    align-self: end;
    display: flex;
    justify-content: space-between;
    padding: 0 67px 5px 6px;
`

const RoundButton = styled.button`
    width: 46px;
    height: 46px;
    border-radius: 50%;
    background-color: rgba(230, 230, 230, 0.75);
`

const Panels = styled.div`
    display: flex;
    flex-direction: column;
    gap: 8px;
`

const PanelHead = styled.div`
    align-self: start;
    display: flex;
    flex-wrap: wrap;
    align-items: center;
    column-gap: ${props => props.$compact ? 10 : 4}px;
    padding: 8px 8px 0 8px;
    font-size: ${props => props.$compact ? 22 : 23}px;
    line-height: 30px;
`

const Pill = styled.label`
    display: flex;
    align-items: center;
    gap: 7px;
    height: ${props => props.$small ? 32 : 30}px;
    padding: ${props => props.$small ? '0 7px' : '0 9px'};
    border-radius: 5px;
    background-color: #f2f2f2;
    select {
        appearance: none;
        outline: none;
    }
`

const Value = styled.span`
    font-size: ${props => props.$small ? '22px' : 'inherit'};
    color: ${props => props.$color || '#2b2b2b'};
    ${IconButton} ~ & {
        margin-left: 8px;
    }
    ${IconButton} ~ a ~ & {
        margin-left: 0;
        line-height: 22px;
    }
    em {
        font-style: normal;
        color: #5aa2e6;
    }
`

const DarkLink = styled.a`
    margin-left: auto;
    color: #5a8ddb;
    text-decoration: none;
`

const InfoTabs = styled.nav`
    height: 79px;
    padding-left: 38px;
    display: flex;
    align-items: center;
    gap: 46px;
    border-bottom: 1px solid #e2e2e2;
    overflow: hidden;
`

const LevelTab = styled.button`
    margin-left: -26px;
    font-size: 38px;
    font-weight: 700;
    font-style: italic;
    color: #808080;
`

const InfoTab = styled.button`
    flex: none;
    align-self: stretch;
    position: relative;
    margin: ${props => props.$active ? '0 -4px' : '0'};
    font-size: ${props => props.$active ? 32 : 28}px;
    font-weight: ${props => props.$active ? 700 : 400};
    color: ${props => props.$active ? '#2b2b2b' : '#666666'};
    mask-image: ${props => props.$faded ? 'linear-gradient(to right, #000000, transparent)' : 'none'};
    &::after {
        content: "";
        display: ${props => props.$active ? 'block' : 'none'};
        position: absolute;
        left: calc(50% - 19px);
        bottom: 0;
        width: 38px;
        height: 8px;
        border-radius: 4px;
        background-color: #e14d42;
    }
`

const SectionHead = styled.div`
    height: 124px;
    padding: 0 36px 7px 31px;
    display: flex;
    align-items: center;
    h2 {
        border-left: 4px solid #cc4840;
        padding-left: 16px;
        margin-right: 17px;
        font-size: 27px;
        line-height: 24px;
        font-weight: 400;
        color: #2b2b2b;
    }
`

const LevelBadge = styled.span`
    margin-left: 18px;
    padding: 0 5px;
    border-radius: 4px;
    background-color: #f09d98;
    color: #ffffff;
    font-size: 17px;
    line-height: 21px;
`

const MoreLink = styled.a`
    margin-left: auto;
    display: flex;
    align-items: center;
    font-size: 23px;
    line-height: 32px;
    color: #5a8ddb;
    text-decoration: none;
`

const Dot = styled.span`
    align-self: flex-start;
    width: 11px;
    height: 11px;
    margin: 0 14px 0 2px;
    border-radius: 50%;
    background-color: #cc4339;
`

const Cards = styled.div`
    display: grid;
    grid-template-columns: 1fr 1fr;
    gap: 24px;
    padding: 0 31px;
`

const Card = styled.div`
    border-radius: 10px;
    background-color: #f6f6f6;
`

const FlowTable = styled.table`
    width: 100%;
    margin-top: 12px;
    border-collapse: collapse;
    th {
        height: 72px;
        padding: 0 0 0 24px;
        text-align: left;
        font-size: 27px;
        font-weight: 400;
        white-space: nowrap;
    }
`

const FlowValue = styled.td`
    padding: 0 23px 0 0;
    text-align: right;
    font-size: 28px;
    font-weight: 500;
    color: ${props => props.$color};
`

const BottomBar = styled.footer`
    background-color: #262626;
    padding-bottom: 11px;
`

const BottomNav = styled.nav`
    height: 110px;
    display: grid;
    grid-template-columns: 166px repeat(4, 1fr);
`

const Sector = styled.button`
    display: flex;
    flex-direction: column;
    align-items: center;
    padding-top: 9px;
    font-size: 21px;
    line-height: 38px;
    color: #828287;
    span {
        margin-top: 4px;
    }
    strong {
        font-weight: 400;
        color: #d8382c;
    }
`

const BottomItem = styled.button`
    display: flex;
    flex-direction: column;
    align-items: center;
    padding-top: 16px;
    font-size: 20px;
    line-height: 28px;
    color: #dadada;
`

const HomeBar = styled.div`
    width: 37%;
    height: 6px;
    margin: 0 auto;
    border-radius: 3px;
    background-color: #b0b0b0;
`
